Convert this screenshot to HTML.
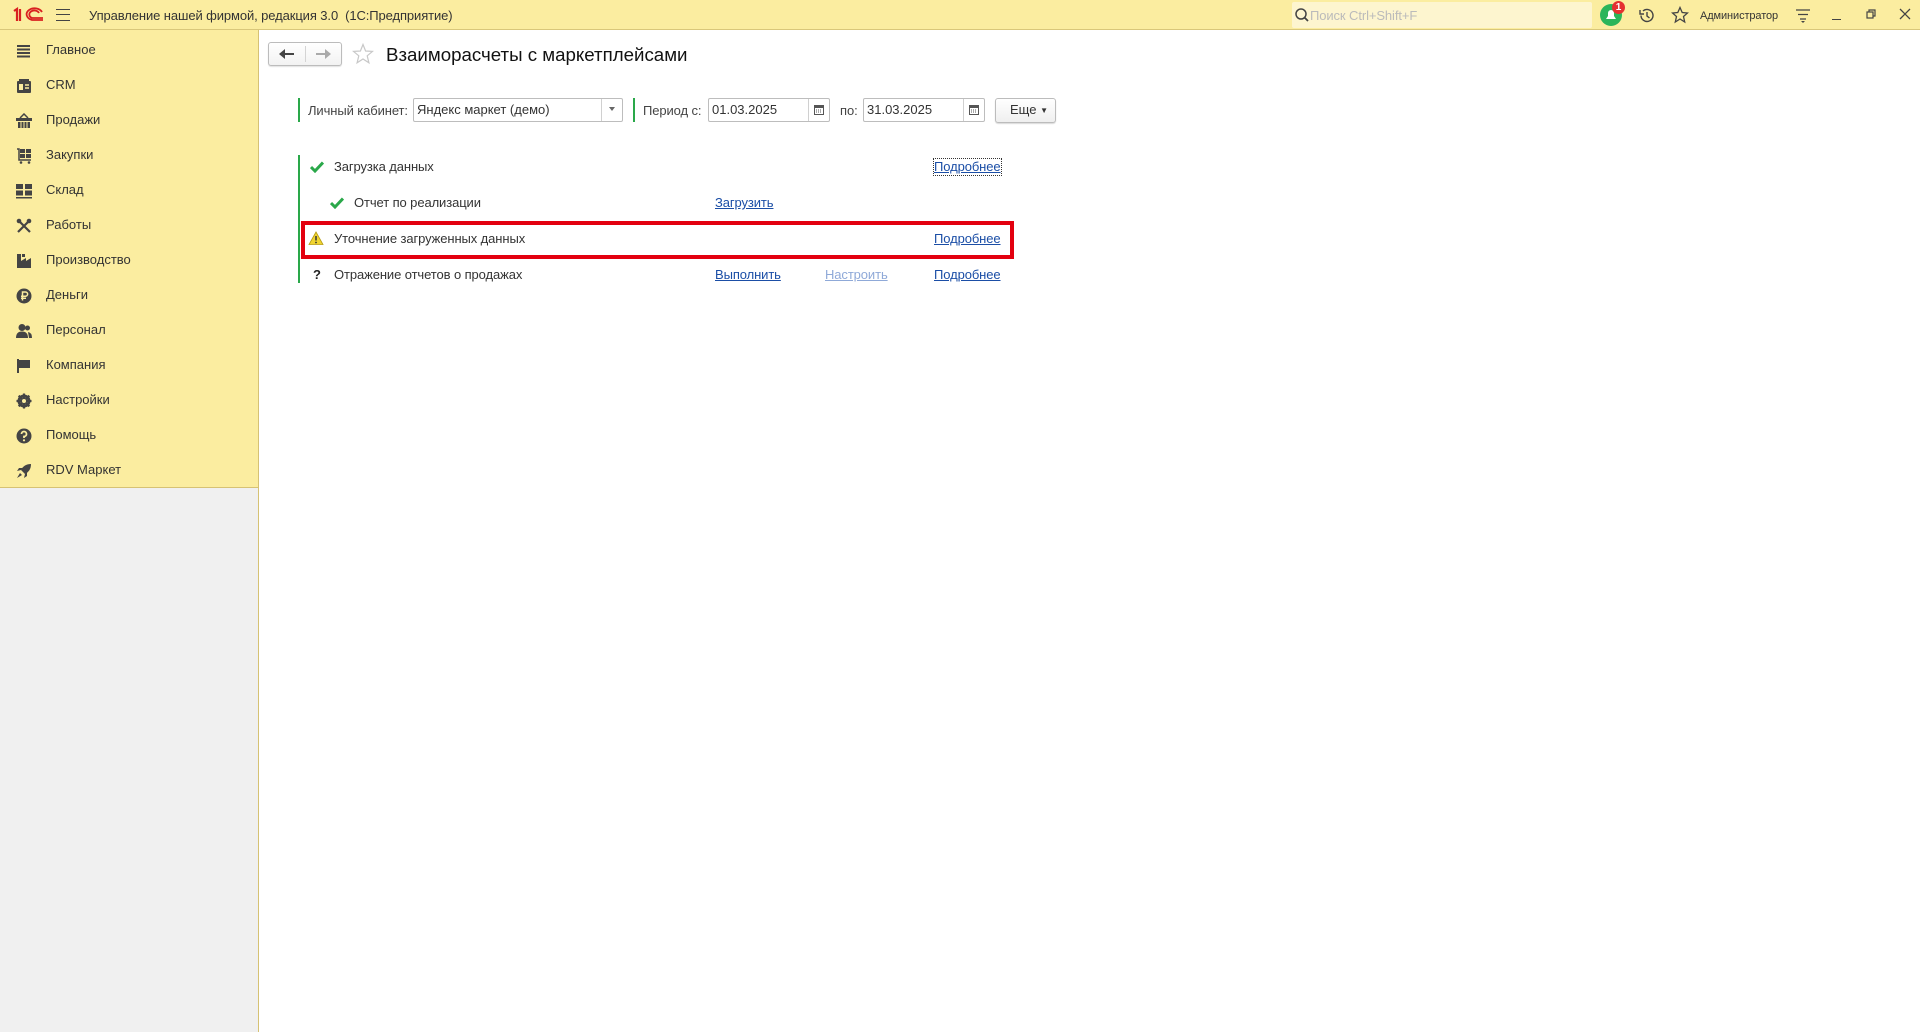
<!DOCTYPE html>
<html><head><meta charset="utf-8"><style>
*{box-sizing:border-box;margin:0;padding:0}
body{width:1920px;height:1032px;overflow:hidden;background:#fff;font-family:"Liberation Sans",Arial,sans-serif;font-size:13px;color:#333;position:relative}
.a{position:absolute}
#top{left:0;top:0;width:1920px;height:30px;background:#fbeda0;border-bottom:1px solid #d9c77a}
#side{left:0;top:30px;width:259px;height:458px;background:#fbeda0;border-right:1px solid #d6c274;border-bottom:1px solid #d6c274}
#side2{left:0;top:488px;width:259px;height:544px;background:#f0f0f0;border-right:1px solid #d6c274}
.si{position:absolute;left:46px;font-size:13px;color:#333;line-height:16px}
.ic{position:absolute;left:16px;width:16px;height:16px}
.lnk{position:absolute;color:#1b4ea6;text-decoration:underline;font-size:13px;line-height:16px;letter-spacing:-0.1px}
.t{position:absolute;font-size:13px;line-height:16px;color:#333;letter-spacing:-0.1px}
.box{position:absolute;border:1px solid #bdbdbd;border-radius:2px;background:#fff;font-size:13px;line-height:21px;padding-left:3px;color:#333}
.gb{position:absolute;width:2px;background:#2aa84a}
</style></head><body>
<div id="top" class="a">
 <svg class="a" style="left:12px;top:7px" width="32" height="16" viewBox="0 0 32 16"><path d="M2 4 L5 2 V14 M8 2 V14" stroke="#d92020" stroke-width="2.2" fill="none"/><path d="M30 5 A8 6 0 1 0 20 13 H31 M27 6 A5 4 0 1 0 20 11 H31" stroke="#d92020" stroke-width="1.8" fill="none"/></svg>
 <div class="a" style="left:56px;top:9px;width:14px;height:12px;border-top:1.5px solid #444;border-bottom:1.5px solid #444"><div style="margin-top:4px;border-top:1.5px solid #444"></div></div>
 <div class="t" style="left:89px;top:8px;font-size:13px">Управление нашей фирмой, редакция 3.0&nbsp; (1С:Предприятие)</div>
 <div class="a" style="left:1292px;top:2px;width:300px;height:26px;background:#fdf5cf;border-radius:2px"></div>
 <svg class="a" style="left:1294px;top:7px" width="16" height="16"><circle cx="7" cy="7" r="5" stroke="#444" stroke-width="1.5" fill="none"/><path d="M10.5 10.5 L14 14" stroke="#444" stroke-width="1.8"/></svg>
 <div class="t" style="left:1310px;top:8px;color:#bbb">Поиск Ctrl+Shift+F</div>
 <div class="a" style="left:1600px;top:4px;width:22px;height:22px;border-radius:50%;background:#2bb55a"></div>
 <svg class="a" style="left:1604px;top:8px" width="14" height="14"><path d="M2 11 L4 8 V5 A3 3 0 0 1 10 5 V8 L12 11 Z" fill="#fff"/></svg>
 <div class="a" style="left:1612px;top:1px;width:13px;height:13px;border-radius:50%;background:#e53030;color:#fff;font-size:10px;font-weight:bold;text-align:center;line-height:13px">1</div>
 <svg class="a" style="left:1638px;top:7px" width="17" height="17"><path d="M3 8.5 A6 6 0 1 0 5 4" stroke="#444" stroke-width="1.4" fill="none"/><path d="M2 3 V7 H6" stroke="#444" stroke-width="1.4" fill="none"/><path d="M9 5 V9 L11.5 11" stroke="#444" stroke-width="1.4" fill="none"/></svg>
 <svg class="a" style="left:1671px;top:6px" width="18" height="18"><path d="M9 1.5 L11.2 6.5 L16.5 7 L12.5 10.5 L13.7 16 L9 13 L4.3 16 L5.5 10.5 L1.5 7 L6.8 6.5 Z" stroke="#444" stroke-width="1.3" fill="none"/></svg>
 <div class="t" style="left:1700px;top:8px;font-size:11px">Администратор</div>
 <svg class="a" style="left:1795px;top:8px" width="16" height="16"><path d="M1 2 H15 M3 6.5 H13 M5 11 H11" stroke="#444" stroke-width="1.3"/><path d="M6 13 L10 13 L8 15 Z" fill="#444"/></svg>
 <div class="a" style="left:1832px;top:19px;width:9px;border-top:1.3px solid #444"></div>
 <svg class="a" style="left:1866px;top:9px" width="11" height="11"><rect x="1" y="3" width="6" height="6" stroke="#444" fill="none" stroke-width="1.2"/><path d="M3 3 V1 H9 V7 H7" stroke="#444" fill="none" stroke-width="1.2"/></svg>
 <svg class="a" style="left:1899px;top:8px" width="12" height="12"><path d="M1 1 L11 11 M11 1 L1 11" stroke="#444" stroke-width="1.3"/></svg>
</div>
<div id="side" class="a">
 <svg class="ic" style="top:13px" viewBox="0 0 16 16"><path d="M1 3 H14 M1 6.5 H14 M1 10 H14 M1 13.5 H14" stroke="#444" stroke-width="2"/></svg><div class="si" style="top:12px">Главное</div>
 <svg class="ic" style="top:48px" viewBox="0 0 16 16"><rect x="1" y="3" width="14" height="12" rx="1" fill="#444"/><rect x="3" y="1" width="10" height="3" fill="#444"/><rect x="3" y="6" width="4" height="6" fill="#fbeda0"/><path d="M9 7 H13 M9 10 H13" stroke="#fbeda0" stroke-width="1.5"/></svg><div class="si" style="top:47px">CRM</div>
 <svg class="ic" style="top:83px" viewBox="0 0 16 16"><path d="M4 5 L8 1 L12 5" stroke="#444" fill="none" stroke-width="1.5"/><rect x="0" y="5" width="16" height="3" fill="#444"/><path d="M2 9 H14 V15 H2 Z" fill="#444"/><path d="M5 9 V15 M8 9 V15 M11 9 V15" stroke="#fbeda0"/></svg><div class="si" style="top:82px">Продажи</div>
 <svg class="ic" style="top:118px" viewBox="0 0 16 16"><path d="M1 1 H3 V12 H15" stroke="#444" fill="none" stroke-width="1.5"/><rect x="4" y="1" width="11" height="9" fill="#444"/><path d="M9.5 1 V10 M4 5.5 H15" stroke="#fbeda0"/><circle cx="5" cy="14.5" r="1.3" fill="#444"/><circle cx="13" cy="14.5" r="1.3" fill="#444"/></svg><div class="si" style="top:117px">Закупки</div>
 <svg class="ic" style="top:153px" viewBox="0 0 16 16"><rect x="0" y="1" width="7" height="5" fill="#444"/><rect x="9" y="1" width="7" height="5" fill="#444"/><rect x="0" y="7.5" width="7" height="5" fill="#444"/><rect x="9" y="7.5" width="7" height="5" fill="#444"/><rect x="0" y="14" width="16" height="1.5" fill="#444"/></svg><div class="si" style="top:152px">Склад</div>
 <svg class="ic" style="top:188px" viewBox="0 0 16 16"><path d="M2 2 L14 14 M14 2 L2 14" stroke="#444" stroke-width="2.2"/><circle cx="3" cy="3" r="2.3" fill="#444"/><circle cx="13" cy="3" r="2.3" fill="#444"/></svg><div class="si" style="top:187px">Работы</div>
 <svg class="ic" style="top:223px" viewBox="0 0 16 16"><path d="M1 15 V1 H5 V8 L10 5 V8 L15 5 V15 Z" fill="#444"/><rect x="6" y="1" width="3" height="3" fill="#444"/></svg><div class="si" style="top:222px">Производство</div>
 <svg class="ic" style="top:258px" viewBox="0 0 16 16"><circle cx="8" cy="8" r="7.5" fill="#444"/><path d="M6.5 12.5 V4 H9.5 A2 2 0 0 1 9.5 8.2 H5 M5 10.3 H10" stroke="#fbeda0" stroke-width="1.5" fill="none"/></svg><div class="si" style="top:257px">Деньги</div>
 <svg class="ic" style="top:293px" viewBox="0 0 16 16"><circle cx="6" cy="4.5" r="3.5" fill="#444"/><path d="M0 15 Q0 8.5 6 8.5 Q12 8.5 12 15 Z" fill="#444"/><circle cx="11.5" cy="5" r="2.5" fill="#444"/><path d="M12 9 Q16 9.5 16 15 H13" fill="#444"/></svg><div class="si" style="top:292px">Персонал</div>
 <svg class="ic" style="top:328px" viewBox="0 0 16 16"><rect x="1" y="1" width="2" height="14" fill="#444"/><path d="M3 2 H14 V10 H3 Z" fill="#444"/></svg><div class="si" style="top:327px">Компания</div>
 <svg class="ic" style="top:363px" viewBox="0 0 16 16"><circle cx="8" cy="8" r="5" stroke="#444" stroke-width="3" fill="none"/><path d="M8 0.5 V15.5 M0.5 8 H15.5 M2.7 2.7 L13.3 13.3 M13.3 2.7 L2.7 13.3" stroke="#444" stroke-width="2.2"/><circle cx="8" cy="8" r="2" fill="#fbeda0"/></svg><div class="si" style="top:362px">Настройки</div>
 <svg class="ic" style="top:398px" viewBox="0 0 16 16"><circle cx="8" cy="8" r="7.5" fill="#444"/><path d="M5.5 6 A2.5 2.5 0 1 1 8 8.5 V10" stroke="#fbeda0" stroke-width="1.8" fill="none"/><circle cx="8" cy="12.3" r="1.1" fill="#fbeda0"/></svg><div class="si" style="top:397px">Помощь</div>
 <svg class="ic" style="top:433px" viewBox="0 0 16 16"><path d="M15 1 Q8 1 5 7 L9 11 Q15 8 15 1 Z" fill="#444"/><path d="M5 7 L1 8 L3 5 H7 Z M9 11 L8 15 L11 13 V9 Z M4 10 L1 15 L6 12 Z" fill="#444"/></svg><div class="si" style="top:432px">RDV Маркет</div>
</div>
<div id="side2" class="a"></div>

<div class="a" style="left:268px;top:42px;width:74px;height:24px;border:1px solid #bcbcbc;border-radius:3px;background:linear-gradient(#fff,#f2f2f2);box-shadow:0 1px 1px rgba(0,0,0,.12)"></div>
<div class="a" style="left:305px;top:46px;width:1px;height:16px;background:#d4d4d4"></div>
<svg class="a" style="left:279px;top:48px" width="16" height="12"><path d="M1 6 H15" stroke="#444" stroke-width="2"/><path d="M0 6 L6 1 V11 Z" fill="#444"/></svg>
<svg class="a" style="left:315px;top:48px" width="16" height="12"><path d="M1 6 H15" stroke="#aaa" stroke-width="2"/><path d="M16 6 L10 1 V11 Z" fill="#aaa"/></svg>
<svg class="a" style="left:352px;top:43px" width="22" height="22"><path d="M11 1.5 L13.6 8 L20.5 8.4 L15.2 12.8 L16.9 19.8 L11 16 L5.1 19.8 L6.8 12.8 L1.5 8.4 L8.4 8 Z" stroke="#c8c8c8" stroke-width="1.2" fill="none"/></svg>
<div class="t" style="left:386px;top:43px;font-size:18.7px;line-height:23px;color:#111;letter-spacing:0">Взаиморасчеты с маркетплейсами</div>

<div class="gb" style="left:298px;top:98px;height:24px"></div>
<div class="t" style="left:308px;top:103px;color:#444">Личный кабинет:</div>
<div class="box" style="left:413px;top:98px;width:210px;height:24px">Яндекс маркет (демо)</div>
<div class="a" style="left:601px;top:99px;width:1px;height:22px;background:#d0d0d0"></div>
<svg class="a" style="left:609px;top:107px" width="6" height="4"><path d="M0 0 H6 L3 4 Z" fill="#666"/></svg>
<div class="gb" style="left:633px;top:98px;height:24px"></div>
<div class="t" style="left:643px;top:103px;color:#444">Период с:</div>
<div class="box" style="left:708px;top:98px;width:122px;height:24px">01.03.2025</div>
<div class="a" style="left:808px;top:99px;width:1px;height:22px;background:#d0d0d0"></div>
<svg class="a" style="left:814px;top:104px" width="10" height="11"><rect x="0.5" y="1.5" width="9" height="9" fill="none" stroke="#555"/><rect x="0.5" y="1.5" width="9" height="2.5" fill="#555"/><path d="M2 6 H8 M2 8 H8" stroke="#555" stroke-dasharray="1 1"/></svg>
<div class="t" style="left:840px;top:103px;color:#444">по:</div>
<div class="box" style="left:863px;top:98px;width:122px;height:24px">31.03.2025</div>
<div class="a" style="left:963px;top:99px;width:1px;height:22px;background:#d0d0d0"></div>
<svg class="a" style="left:969px;top:104px" width="10" height="11"><rect x="0.5" y="1.5" width="9" height="9" fill="none" stroke="#555"/><rect x="0.5" y="1.5" width="9" height="2.5" fill="#555"/><path d="M2 6 H8 M2 8 H8" stroke="#555" stroke-dasharray="1 1"/></svg>
<div class="a" style="left:995px;top:98px;width:61px;height:25px;border:1px solid #bcbcbc;border-radius:3px;background:linear-gradient(#fff,#efefef);box-shadow:0 1px 1px rgba(0,0,0,.15);font-size:13px;line-height:22px;padding-left:14px;color:#333">Еще <span style="font-size:8px;vertical-align:1px">▼</span></div>

<div class="gb" style="left:298px;top:155px;height:128px"></div>
<svg class="a" style="left:310px;top:161px" width="14" height="12"><path d="M1 6 L5 10 L13 1.5" stroke="#2aa84a" stroke-width="3" fill="none"/></svg>
<div class="t" style="left:334px;top:159px">Загрузка данных</div>
<div class="lnk" style="left:934px;top:159px;outline:1px dotted #333">Подробнее</div>
<svg class="a" style="left:330px;top:197px" width="14" height="12"><path d="M1 6 L5 10 L13 1.5" stroke="#2aa84a" stroke-width="3" fill="none"/></svg>
<div class="t" style="left:354px;top:195px">Отчет по реализации</div>
<div class="lnk" style="left:715px;top:195px">Загрузить</div>
<div class="a" style="left:301px;top:221px;width:713px;height:38px;border:4px solid #e3000f"></div>
<svg class="a" style="left:308px;top:231px" width="16" height="14"><path d="M8 1 L15 13.5 H1 Z" fill="#f0d430" stroke="#b59a10" stroke-width="0.8"/><path d="M8 5 V9.5" stroke="#333" stroke-width="1.5"/><circle cx="8" cy="11.5" r="0.9" fill="#333"/></svg>
<div class="t" style="left:334px;top:231px">Уточнение загруженных данных</div>
<div class="lnk" style="left:934px;top:231px">Подробнее</div>
<div class="t" style="left:313px;top:267px;font-weight:bold;color:#222">?</div>
<div class="t" style="left:334px;top:267px">Отражение отчетов о продажах</div>
<div class="lnk" style="left:715px;top:267px">Выполнить</div>
<div class="lnk" style="left:825px;top:267px;color:#8fa9d8">Настроить</div>
<div class="lnk" style="left:934px;top:267px">Подробнее</div>
</body></html>
